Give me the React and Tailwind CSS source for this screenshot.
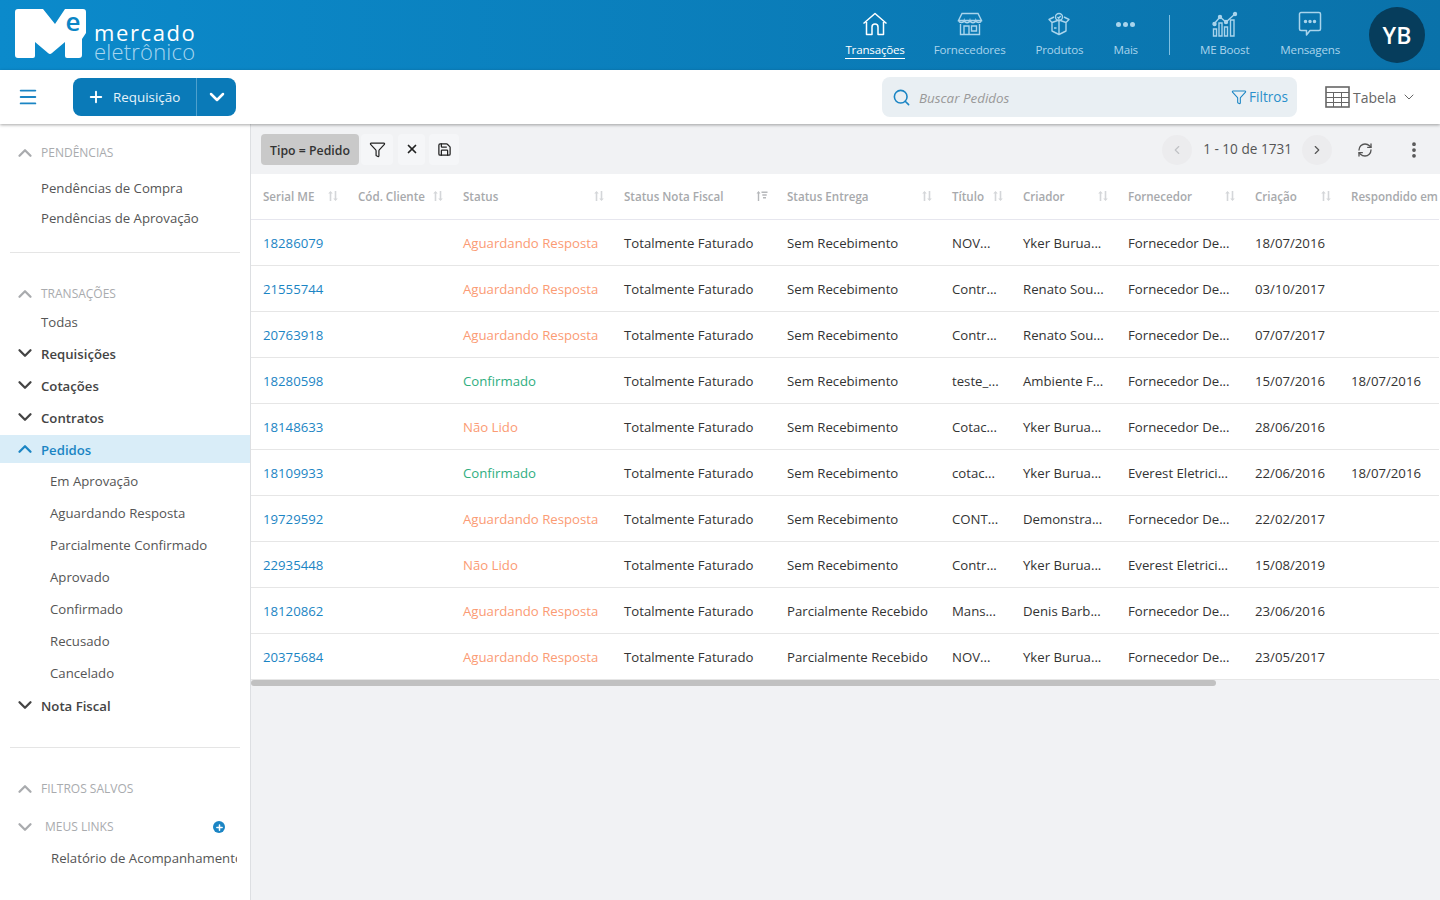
import React from 'react';
import { ChevronUp, ChevronDown, ChevronLeft, ChevronRight, Menu, Plus, Search, Filter, X, Save, RefreshCw, EllipsisVertical } from 'lucide-react';

const rows = [
  ['18286079', 'Aguardando Resposta', 'Sem Recebimento', 'NOV...', 'Yker Burua...', 'Fornecedor De...', '18/07/2016', ''],
  ['21555744', 'Aguardando Resposta', 'Sem Recebimento', 'Contr...', 'Renato Sou...', 'Fornecedor De...', '03/10/2017', ''],
  ['20763918', 'Aguardando Resposta', 'Sem Recebimento', 'Contr...', 'Renato Sou...', 'Fornecedor De...', '07/07/2017', ''],
  ['18280598', 'Confirmado', 'Sem Recebimento', 'teste_...', 'Ambiente F...', 'Fornecedor De...', '15/07/2016', '18/07/2016'],
  ['18148633', 'Não Lido', 'Sem Recebimento', 'Cotac...', 'Yker Burua...', 'Fornecedor De...', '28/06/2016', ''],
  ['18109933', 'Confirmado', 'Sem Recebimento', 'cotac...', 'Yker Burua...', 'Everest Eletrici...', '22/06/2016', '18/07/2016'],
  ['19729592', 'Aguardando Resposta', 'Sem Recebimento', 'CONT...', 'Demonstra...', 'Fornecedor De...', '22/02/2017', ''],
  ['22935448', 'Não Lido', 'Sem Recebimento', 'Contr...', 'Yker Burua...', 'Everest Eletrici...', '15/08/2019', ''],
  ['18120862', 'Aguardando Resposta', 'Parcialmente Recebido', 'Mans...', 'Denis Barb...', 'Fornecedor De...', '23/06/2016', ''],
  ['20375684', 'Aguardando Resposta', 'Parcialmente Recebido', 'NOV...', 'Yker Burua...', 'Fornecedor De...', '23/05/2017', ''],
];

const columns = [
  { label: 'Serial ME', sort: true },
  { label: 'Cód. Cliente', sort: true },
  { label: 'Status', sort: true },
  { label: 'Status Nota Fiscal', sort: true, active: true },
  { label: 'Status Entrega', sort: true },
  { label: 'Título', sort: true },
  { label: 'Criador', sort: true },
  { label: 'Fornecedor', sort: true },
  { label: 'Criação', sort: true },
  { label: 'Respondido em' },
];

const gridCols = 'grid grid-cols-[95px_105px_161px_163px_165px_71px_105px_127px_96px_100px]';

const statusColor = (status) => {
  if (status === 'Confirmado') return 'text-[#2fae7f]';
  return 'text-[#fb9b74]';
};

const SortIcon = ({ active }) => (
  <svg width="12" height="12" viewBox="0 0 12 12" className={`${active ? 'text-[#b5b7ba]' : 'text-[#d4d6d9]'} shrink-0`} fill="currentColor">
    {active ? (
      <path d="M2.5 1L4.5 3.5H3.2V11H1.8V3.5H.5zM5.5 1.5h6v1.6h-6zM6.3 4.3h4.4v1.5H6.3zM7 7h3v1.5H7z" />
    ) : (
      <path d="M3.5 1L5.8 3.6H4.3V11H2.7V3.6H1.2zM7.7 1h1.6v7.4h1.5L8.5 11 6.2 8.4h1.5z" />
    )}
  </svg>
);

const NavItem = ({ label, active, children }) => (
  <div className="flex flex-col items-center pb-[3px]">
    <div className={`h-[30px] flex items-center justify-center ${active ? 'text-white' : 'text-[#a9d4ec]'}`}>{children}</div>
    <span className={`mt-[2px] text-[11.6px] leading-[17px] tracking-[-0.2px] ${active ? 'text-white border-b border-white' : 'text-[#a9d4ec]'}`}>{label}</span>
  </div>
);

const SideHeader = ({ label, className = '' }) => (
  <div className={`flex items-center pl-[14px] ${className}`}>
    <ChevronUp size={22} strokeWidth={2.5} className="text-[#a9abae]" />
    <span className="ml-[5px] text-[12px] text-[#a9abae]">{label}</span>
  </div>
);

const SideGroup = ({ label, open, active }) => (
  <div className={`h-[28px] flex items-center pl-[14px] ${active ? 'bg-[#d9edf8] text-[#1b85c4]' : 'text-[#444]'}`}>
    {open ? <ChevronUp size={22} strokeWidth={2.5} /> : <ChevronDown size={22} strokeWidth={2.5} />}
    <span className="ml-[5px] pt-[4px] text-[13.2px] font-semibold">{label}</span>
  </div>
);

const SideLink = ({ label, className = 'pl-[50px] h-[32px]' }) => (
  <div className={`flex items-center pt-[2px] text-[13.2px] text-[#555] whitespace-nowrap ${className}`}>{label}</div>
);

const Logo = () => (
  <div className="flex items-start">
    <svg width="71" height="49" viewBox="0 0 71 49" className="shrink-0">
      <path fill="#fff" d="M3 0H28L40 15 50 0H68a3 3 0 0 1 3 3V24L67 30V46a3 3 0 0 1-3 3H52a2 2 0 0 1-2-2V33L37 44a3 3 0 0 1-4 0L20 33V47a2 2 0 0 1-2 2H3a3 3 0 0 1-3-3V3a3 3 0 0 1 3-3z" />
      <text x="58" y="22" textAnchor="middle" fontFamily="Open Sans, sans-serif" fontWeight="600" fontSize="26" fill="#0b86c6">e</text>
    </svg>
    <div className="ml-[8px] mt-[13px] flex flex-col">
      <span className="font-['Open_Sans',sans-serif] font-medium text-[22px] leading-[20px] tracking-[1.6px] text-white">mercado</span>
      <span className="-mt-px font-['Open_Sans',sans-serif] font-light text-[22px] leading-[20px] tracking-[0.2px] text-[#a8d6ef]">eletrônico</span>
    </div>
  </div>
);

const App = () => {
  return (
    <div className="w-[1440px] h-[900px] overflow-hidden bg-[#f1f2f4] flex flex-col font-['Open_Sans',sans-serif] text-[13.2px]">
      {/* Top bar */}
      <header className="h-[70px] shrink-0 bg-gradient-to-r from-[#0b8acb] to-[#0a72aa] flex items-center pl-[15px] pr-[15px]">
        <Logo />
        <nav className="ml-auto flex items-center">
          <NavItem label="Transações" active>
            <svg width="26" height="24" viewBox="0 0 26 24" fill="none" stroke="currentColor" strokeWidth="1.5" strokeLinejoin="round">
              <path d="M1.5 11.5L13 1.5l11.5 10M4.5 10v12.5h5.5V15a3 3 0 0 1 6 0v7.5h5.5V10" />
            </svg>
          </NavItem>
          <div className="ml-[29px]">
            <NavItem label="Fornecedores">
              <svg width="26" height="24" viewBox="0 0 26 24" fill="none" stroke="currentColor" strokeWidth="1.4">
                <path d="M5 1.5h16l3.5 7H1.5zM1.5 8.5a3 3 0 0 0 5.7 0 3 3 0 0 0 5.8 0 3 3 0 0 0 5.8 0 3 3 0 0 0 5.7 0M3.5 12v10.5h19V12M7 22.5V14h5v8.5M14.5 14h5v5h-5z" />
              </svg>
            </NavItem>
          </div>
          <div className="ml-[30px]">
            <NavItem label="Produtos">
              <svg width="24" height="24" viewBox="0 0 24 24" fill="none" stroke="currentColor" strokeWidth="1.4" strokeLinejoin="round">
                <circle cx="12" cy="5" r="3.5" />
                <path d="M10.5 5l1.2 1.2 2-2.2M7 5L2 7.5l3 3L12 8l7 2.5 3-3L17 5M5 10.5V19l7 3.5 7-3.5v-8.5M12 8v14.5M7 16h2.5" />
              </svg>
            </NavItem>
          </div>
          <div className="ml-[30px]">
            <NavItem label="Mais">
              <div className="flex gap-[2px]">
                <span className="w-[5px] h-[5px] rounded-full bg-[#a9d4ec]" />
                <span className="w-[5px] h-[5px] rounded-full bg-[#a9d4ec]" />
                <span className="w-[5px] h-[5px] rounded-full bg-[#a9d4ec]" />
              </div>
            </NavItem>
          </div>
          <div className="ml-[31px] w-px h-[40px] bg-[#7fc0e2]" />
          <div className="ml-[30px]">
            <NavItem label="ME Boost">
              <svg width="26" height="26" viewBox="0 0 26 26" fill="none" stroke="currentColor" strokeWidth="1.4">
                <path d="M2 13l6-7 6 5 9-8" />
                <circle cx="2.5" cy="13" r="1.5" fill="currentColor" />
                <circle cx="8" cy="6" r="1.5" fill="currentColor" />
                <circle cx="14" cy="11" r="1.5" fill="currentColor" />
                <circle cx="23" cy="3" r="1.5" fill="currentColor" />
                <path d="M1.5 18h3v7h-3zM7 12h3v13H7zM12.5 16h3v9h-3zM18.5 9h3.5v16h-3.5z" />
              </svg>
            </NavItem>
          </div>
          <div className="ml-[31px]">
            <NavItem label="Mensagens">
              <svg width="24" height="26" viewBox="0 0 24 26" fill="none" stroke="currentColor" strokeWidth="1.5" strokeLinejoin="round">
                <path d="M3 1.5h18a1.5 1.5 0 0 1 1.5 1.5v15a1.5 1.5 0 0 1-1.5 1.5H12l-3.5 4.5v-4.5H3A1.5 1.5 0 0 1 1.5 18V3A1.5 1.5 0 0 1 3 1.5z" />
                <circle cx="7.5" cy="10.5" r="1" fill="currentColor" />
                <circle cx="12" cy="10.5" r="1" fill="currentColor" />
                <circle cx="16.5" cy="10.5" r="1" fill="currentColor" />
              </svg>
            </NavItem>
          </div>
          <div className="ml-[29px] w-[56px] h-[56px] rounded-full bg-[#063d5c] text-white flex items-center justify-center text-[23px] font-semibold">YB</div>
        </nav>
      </header>

      {/* Actions bar */}
      <div className="h-[54px] shrink-0 bg-white flex items-center shadow-[0_1px_3px_rgba(0,0,0,0.35)] z-10">
        <Menu size={22} strokeWidth={2} className="ml-[17px] text-[#1b85c4]" />
        <div className="ml-[34px] h-[38px] w-[163px] rounded-[8px] bg-[#0a7ab8] text-white flex items-center">
          <div className="flex-1 flex items-center pl-[14px]">
            <Plus size={18} strokeWidth={2.5} />
            <span className="ml-[8px] text-[13.4px] text-[#e6f3fa]">Requisição</span>
          </div>
          <div className="w-px h-full bg-[#4ea0cd]" />
          <div className="w-[39px] flex items-center justify-center">
            <ChevronDown size={24} strokeWidth={2.5} />
          </div>
        </div>
        <div className="ml-auto w-[415px] h-[40px] rounded-[8px] bg-[#e9eff3] flex items-center pl-[10px] pr-[9px]">
          <Search size={19} className="text-[#1b85c4]" />
          <span className="ml-[8px] pt-[2px] text-[13.4px] italic text-[#999]">Buscar Pedidos</span>
          <Filter size={16} strokeWidth={1.6} className="ml-auto text-[#1b85c4]" />
          <span className="ml-[2px] pt-[1px] text-[13.6px] text-[#2a90cc]">Filtros</span>
        </div>
        <div className="ml-[28px] w-[115px] flex items-center text-[#666]">
          <svg width="25" height="22" viewBox="0 0 25 22" fill="none" stroke="currentColor" className="shrink-0">
            <rect x="1" y="1" width="23" height="20" strokeWidth="1.6" />
            <path d="M1 6.5h23M1 11.5h23M1 16.5h23M8.5 6.5V21M16.5 6.5V21" strokeWidth="1" />
          </svg>
          <span className="ml-[3px] pt-[1px] text-[14px]">Tabela</span>
          <ChevronDown size={16} strokeWidth={1.5} className="ml-[5px]" />
        </div>
      </div>

      <div className="flex-1 flex min-h-0">
        {/* Sidebar */}
        <aside className="w-[251px] shrink-0 bg-white border-r border-[#dddfe2] flex flex-col">
          <SideHeader label="PENDÊNCIAS" className="mt-[19px] h-[20px]" />
          <SideLink label="Pendências de Compra" className="pl-[41px] h-[30px] mt-[10px]" />
          <SideLink label="Pendências de Aprovação" className="pl-[41px] h-[30px]" />
          <div className="mx-[10px] mt-[19px] h-px bg-[#e5e5e5]" />
          <SideHeader label="TRANSAÇÕES" className="mt-[31px] h-[20px]" />
          <SideLink label="Todas" className="pl-[41px] h-[28px] mt-[4px]" />
          <div className="flex flex-col gap-[4px] mt-[3px]">
            <SideGroup label="Requisições" />
            <SideGroup label="Cotações" />
            <SideGroup label="Contratos" />
            <SideGroup label="Pedidos" open active />
          </div>
          <div className="mt-[2px]">
            {['Em Aprovação', 'Aguardando Resposta', 'Parcialmente Confirmado', 'Aprovado', 'Confirmado', 'Recusado', 'Cancelado'].map((item) => (
              <SideLink key={item} label={item} />
            ))}
          </div>
          <div className="mt-[2px]">
            <SideGroup label="Nota Fiscal" />
          </div>
          <div className="mx-[10px] mt-[28px] h-px bg-[#e5e5e5]" />
          <SideHeader label="FILTROS SALVOS" className="mt-[31px] h-[20px]" />
          <div className="mt-[18px] h-[20px] flex items-center pl-[14px] pr-[25px] text-[#a9abae]">
            <ChevronDown size={22} strokeWidth={2.5} />
            <span className="ml-[9px] text-[12px]">MEUS LINKS</span>
            <span className="ml-auto w-[12px] h-[12px] rounded-full bg-[#1b85c4] flex items-center justify-center text-white">
              <Plus size={9} strokeWidth={4} />
            </span>
          </div>
          <div className="ml-[51px] mt-[12px] w-[186px] overflow-hidden whitespace-nowrap text-[13.2px] text-[#555]">Relatório de Acompanhamento</div>
        </aside>

        {/* Content */}
        <main className="flex-1 min-w-0 flex flex-col">
          <div className="h-[50px] shrink-0 flex items-center pl-[10px] pr-[16px]">
            <div className="h-[31px] w-[98px] rounded-[4px] bg-[#c9c9c9] flex items-center justify-center pt-[4px] text-[12.3px] font-semibold text-[#333]">Tipo = Pedido</div>
            <div className="ml-[2px] w-[32px] h-[31px] rounded-[4px] bg-[#f5f6f8] flex items-center justify-center">
              <Filter size={17} strokeWidth={1.7} className="text-[#222]" />
            </div>
            <div className="ml-[5px] w-[27px] h-[31px] rounded-[4px] bg-[#f5f6f8] flex items-center justify-center">
              <X size={14} strokeWidth={3} className="text-[#222]" />
            </div>
            <div className="ml-[4px] w-[30px] h-[31px] rounded-[4px] bg-[#f5f6f8] flex items-center justify-center">
              <Save size={15} strokeWidth={2} className="text-[#222]" />
            </div>
            <div className="ml-auto mt-[1px] w-[30px] h-[30px] rounded-full bg-[#ececee] flex items-center justify-center">
              <ChevronLeft size={14} className="text-[#c0c2c5]" />
            </div>
            <span className="ml-[11px] text-[13.6px] text-[#555]">1 - 10 de 1731</span>
            <div className="ml-[10px] mt-[1px] w-[30px] h-[30px] rounded-full bg-[#ececee] flex items-center justify-center">
              <ChevronRight size={14} className="text-[#555]" />
            </div>
            <RefreshCw size={16} className="ml-[25px] mt-[1px] text-[#555]" />
            <EllipsisVertical size={20} strokeWidth={2.5} className="ml-[31px] mt-[1px] text-[#555]" />
          </div>

          <div className="overflow-hidden bg-white">
            <div className={`${gridCols} h-[46px] w-[1188px] border-b border-[#e6e6ee] items-center`}>
              {columns.map((col) => (
                <div key={col.label} className="pl-[12px] pr-[7px] flex items-center text-[11.6px] font-semibold text-[#a7a9ac] whitespace-nowrap">
                  <span>{col.label}</span>
                  {col.sort && (
                    <span className="ml-auto">
                      <SortIcon active={col.active} />
                    </span>
                  )}
                </div>
              ))}
            </div>
            {rows.map((row) => (
              <div key={row[0]} className={`${gridCols} h-[46px] w-[1188px] pt-[2px] border-b border-[#e6e6e6] items-center text-[#333] last:border-b-0 whitespace-nowrap`}>
                <div className="pl-[12px] text-[#1b85c4]">{row[0]}</div>
                <div />
                <div className={`pl-[12px] ${statusColor(row[1])}`}>{row[1]}</div>
                <div className="pl-[12px]">Totalmente Faturado</div>
                <div className="pl-[12px]">{row[2]}</div>
                <div className="pl-[12px]">{row[3]}</div>
                <div className="pl-[12px]">{row[4]}</div>
                <div className="pl-[12px]">{row[5]}</div>
                <div className="pl-[12px]">{row[6]}</div>
                <div className="pl-[12px]">{row[7]}</div>
              </div>
            ))}
            <div className="h-[6px] bg-[#f1f2f4]">
              <div className="h-full w-[965px] rounded-full bg-[#c1c1c1]" />
            </div>
          </div>
        </main>
      </div>
    </div>
  );
};

export default App;
